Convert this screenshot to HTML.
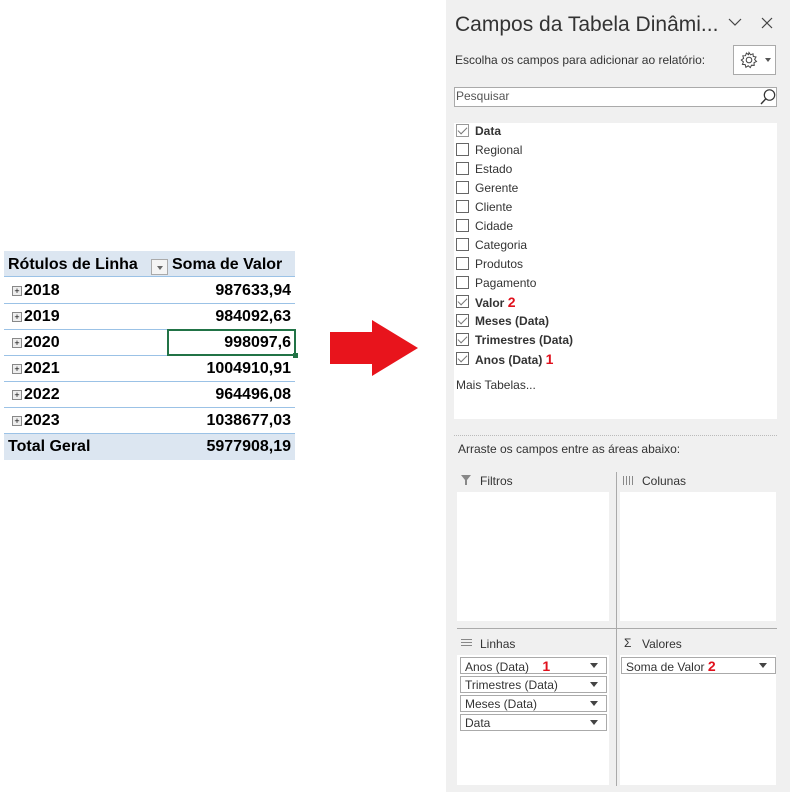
<!DOCTYPE html>
<html><head><meta charset="utf-8"><style>
*{margin:0;padding:0;box-sizing:border-box}
body{width:790px;height:792px;background:#fff;position:relative;overflow:hidden;font-family:"Liberation Sans",sans-serif;color:#222}
.a{position:absolute}
.t{font-size:16px;font-weight:bold;color:#000}
.row{position:absolute;left:4px;width:291px;height:26px;border-bottom:1px solid #9bc2e6}
.row .l{position:absolute;left:8px;top:4px}
.row .v{position:absolute;right:4px;top:4px}
.pl{display:inline-block;width:10px;height:10px;border:1px solid #888;background:#eee;font-size:9px;line-height:8px;text-align:center;font-weight:normal;vertical-align:1px;margin-right:2px}
.p{font-size:12px;color:#333}
.cb{position:absolute;left:456px;width:13px;height:13px;border:1px solid #666;background:#fff}
.cb.k::after{content:"";position:absolute;left:3px;top:0px;width:4px;height:8px;border:solid #777;border-width:0 1.5px 1.5px 0;transform:rotate(45deg)}
.fl{position:absolute;left:475px;font-size:12px;color:#333;line-height:14px}
.it{position:absolute;height:17px;border:1px solid #aaa;background:#fff;font-size:12px;padding:1px 4px;color:#333;line-height:14px}
.it::after{content:"";position:absolute;right:8px;top:5px;border:4px solid transparent;border-top:5px solid #444}
.r{color:#e0101c;font-weight:bold;font-size:14px;line-height:14px}
</style></head><body>
<div class="a" style="left:4px;top:251px;width:291px;height:26px;background:#dce6f1;border-bottom:1px solid #9bc2e6"></div>
<div class="a t" style="left:8px;top:256px">Rótulos de Linha</div>
<div class="a" style="left:151px;top:259px;width:17px;height:16px;border:1px solid #aaa;background:#f4f4f4"><div style="position:absolute;left:5px;top:6px;border:3px solid transparent;border-top:4px solid #666"></div></div>
<div class="a t" style="left:172px;top:256px">Soma de Valor</div>
<div class="row t" style="top:278px"><span class="l"><span class="pl">+</span>2018</span><span class="v">987633,94</span></div>
<div class="row t" style="top:304px"><span class="l"><span class="pl">+</span>2019</span><span class="v">984092,63</span></div>
<div class="row t" style="top:330px"><span class="l"><span class="pl">+</span>2020</span><span class="v">998097,6</span></div>
<div class="row t" style="top:356px"><span class="l"><span class="pl">+</span>2021</span><span class="v">1004910,91</span></div>
<div class="row t" style="top:382px"><span class="l"><span class="pl">+</span>2022</span><span class="v">964496,08</span></div>
<div class="row t" style="top:408px"><span class="l"><span class="pl">+</span>2023</span><span class="v">1038677,03</span></div>
<div class="a" style="left:4px;top:434px;width:291px;height:26px;background:#dce6f1"></div>
<div class="a t" style="left:8px;top:438px">Total Geral</div>
<div class="a t" style="right:499px;top:438px">5977908,19</div>
<div class="a" style="left:167px;top:329px;width:129px;height:27px;border:2px solid #217346"></div>
<div class="a" style="left:293px;top:353px;width:5px;height:5px;background:#217346"></div>
<svg class="a" style="left:328px;top:318px" width="94" height="60"><polygon points="2,14 44,14 44,2 90,30 44,58 44,46 2,46" fill="#e8141c"/></svg>
<div class="a" style="left:446px;top:0;width:344px;height:792px;background:#f0f0f0"></div>
<div class="a" style="left:455px;top:13px;font-size:21px;color:#333">Campos da Tabela Dinâmi...</div>
<svg class="a" style="left:728px;top:17px" width="14" height="10"><path d="M1 2 L7 8 L13 2" fill="none" stroke="#444" stroke-width="1.2"/></svg>
<svg class="a" style="left:761px;top:17px" width="12" height="12"><path d="M1 1 L11 11 M11 1 L1 11" stroke="#444" stroke-width="1.2"/></svg>
<div class="a p" style="left:455px;top:53px">Escolha os campos para adicionar ao relatório:</div>
<div class="a" style="left:733px;top:45px;width:43px;height:30px;border:1px solid #aaa;background:#fff"></div>
<svg class="a" style="left:740px;top:51px" width="18" height="18"><circle cx="9" cy="9" r="2.8" fill="none" stroke="#444"/><path d="M9 1.5 L10.5 3.8 L13 2.8 L13.3 5.5 L16 6 L14.6 8.4 L16.5 10.5 L14 11.7 L14.2 14.4 L11.5 14.2 L10.3 16.6 L8.2 14.8 L5.9 16.3 L5.2 13.6 L2.4 13.4 L3.4 10.9 L1.3 9 L3.6 7.4 L2.8 4.8 L5.5 4.7 L6.4 2.1 L8.5 3.6 Z" fill="none" stroke="#444" stroke-width="1"/></svg>
<div class="a" style="left:765px;top:58px;border:3.5px solid transparent;border-top:4px solid #555"></div>
<div class="a" style="left:454px;top:87px;width:323px;height:20px;border:1px solid #aaa;background:#fff"></div>
<div class="a p" style="left:456px;top:89px;color:#555">Pesquisar</div>
<svg class="a" style="left:759px;top:88px" width="18" height="18"><circle cx="10.5" cy="7" r="5.2" fill="none" stroke="#333" stroke-width="1.2"/><path d="M6.8 10.8 L2 16" stroke="#333" stroke-width="1.4"/></svg>
<div class="a" style="left:454px;top:123px;width:323px;height:296px;background:#fff"></div>
<div class="cb k" style="top:124px;border-color:#999"></div><div class="fl" style="top:124px;font-weight:bold">Data</div>
<div class="cb" style="top:143px"></div><div class="fl" style="top:143px">Regional</div>
<div class="cb" style="top:162px"></div><div class="fl" style="top:162px">Estado</div>
<div class="cb" style="top:181px"></div><div class="fl" style="top:181px">Gerente</div>
<div class="cb" style="top:200px"></div><div class="fl" style="top:200px">Cliente</div>
<div class="cb" style="top:219px"></div><div class="fl" style="top:219px">Cidade</div>
<div class="cb" style="top:238px"></div><div class="fl" style="top:238px">Categoria</div>
<div class="cb" style="top:257px"></div><div class="fl" style="top:257px">Produtos</div>
<div class="cb" style="top:276px"></div><div class="fl" style="top:276px">Pagamento</div>
<div class="cb k" style="top:295px"></div><div class="fl" style="top:295px;font-weight:bold">Valor <span class="r">2</span></div>
<div class="cb k" style="top:314px"></div><div class="fl" style="top:314px;font-weight:bold">Meses (Data)</div>
<div class="cb k" style="top:333px"></div><div class="fl" style="top:333px;font-weight:bold">Trimestres (Data)</div>
<div class="cb k" style="top:352px"></div><div class="fl" style="top:352px;font-weight:bold">Anos (Data) <span class="r">1</span></div>
<div class="a p" style="left:456px;top:378px">Mais Tabelas...</div>
<div class="a" style="left:454px;top:435px;width:323px;border-top:1px dotted #bbb"></div>
<div class="a p" style="left:458px;top:442px">Arraste os campos entre as áreas abaixo:</div>
<div class="a" style="left:616px;top:472px;width:1px;height:314px;background:#aaa"></div>
<div class="a" style="left:457px;top:628px;width:320px;height:1px;background:#aaa"></div>
<svg class="a" style="left:461px;top:475px" width="10" height="10"><path d="M0 0 H10 L6 5 V10 H4 V5 Z" fill="#888"/></svg>
<div class="a p" style="left:480px;top:474px">Filtros</div>
<div class="a" style="left:623px;top:476px;width:10px;height:9px;background:repeating-linear-gradient(90deg,#888 0 1px,transparent 1px 3px)"></div>
<div class="a p" style="left:642px;top:474px">Colunas</div>
<div class="a" style="left:457px;top:492px;width:152px;height:129px;background:#fff"></div>
<div class="a" style="left:620px;top:492px;width:156px;height:129px;background:#fff"></div>
<div class="a" style="left:461px;top:639px;width:11px;height:7px;background:repeating-linear-gradient(180deg,#888 0 1px,transparent 1px 3px)"></div>
<div class="a p" style="left:480px;top:637px">Linhas</div>
<div class="a p" style="left:624px;top:636px">Σ</div>
<div class="a p" style="left:642px;top:637px">Valores</div>
<div class="a" style="left:457px;top:655px;width:152px;height:130px;background:#fff"></div>
<div class="a" style="left:620px;top:655px;width:156px;height:130px;background:#fff"></div>
<div class="it" style="left:460px;top:657px;width:147px">Anos (Data) &nbsp; &nbsp;<span class="r">1</span></div>
<div class="it" style="left:460px;top:676px;width:147px">Trimestres (Data)</div>
<div class="it" style="left:460px;top:695px;width:147px">Meses (Data)</div>
<div class="it" style="left:460px;top:714px;width:147px">Data</div>
<div class="it" style="left:621px;top:657px;width:155px">Soma de Valor <span class="r">2</span></div>
</body></html>
